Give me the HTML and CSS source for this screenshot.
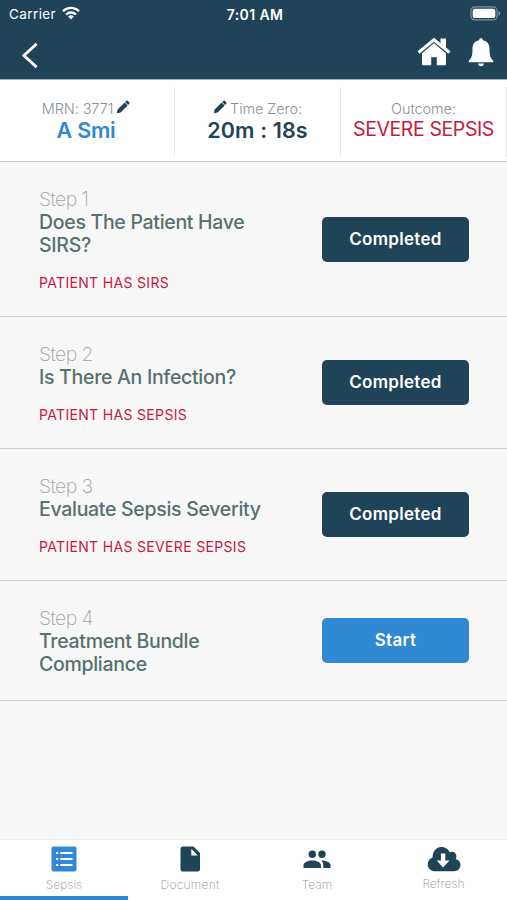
FILE: index.html
```html
<!DOCTYPE html>
<html lang="en">
<head>
<meta charset="utf-8">
<title>Sepsis</title>
<link rel="stylesheet" href="styles.css">
</head>
<body>
<div class="app">
  <header class="header">
    <div class="status">
      <div class="carrier"><span>Carrier</span>
        <svg width="18" height="14" viewBox="0 0 18 14" fill="none" stroke="#fff" stroke-width="2.3"><path d="M1 5.2a11.4 11.4 0 0 1 16 0M4 8.5a7.2 7.2 0 0 1 10 0"/><path d="M9 13.6l-2.9-3a4.2 4.2 0 0 1 5.8 0z" fill="#fff" stroke="none"/></svg>
      </div>
      <div class="clock">7:01 AM</div>
      <svg class="battery" width="31" height="15" viewBox="0 0 31 15"><rect x=".9" y=".9" width="26.2" height="13" rx="4" fill="none" stroke="#7d93a1" stroke-width="1.2"/><rect x="2.7" y="2.7" width="22.6" height="9.4" rx="2.2" fill="#fff"/><path d="M28.5 5v5q1.8-.8 1.8-2.5T28.5 5z" fill="#7d93a1"/></svg>
    </div>
    <nav class="navbar">
      <svg class="back" width="18" height="27" viewBox="0 0 18 27" fill="none" stroke="#fff" stroke-width="2.8"><path d="M15.6 1.900L2.900 13.500l12.700 11.600"/></svg>
      <div class="actions">
        <svg class="home" width="34" height="28" viewBox="0 0 34 28" fill="#fff"><path d="M17 4.800L29 15.200V26q0 1.200-1.200 1.200H19.800v-8h-5.600v8H6.200Q5 27.200 5 26V15.200z"/><path d="M1.700 14.600L17 1.800 32.300 14.600" fill="none" stroke="#1f4357" stroke-width="5"/><path d="M23.500.5h5.500v9.500l-5.500-4.300z"/><path d="M1.500 14.600L17 1.800l15.500 12.800" fill="none" stroke="#fff" stroke-width="3.200"/></svg>
        <svg width="26" height="30" viewBox="0 0 26 30" fill="#fff"><path d="M13 1q1.700 0 1.900 2.200c4.300.8 6.600 4 6.600 8.400 0 7.200.8 9.300 3.700 12.100v1.600H.8v-1.600c2.900-2.800 3.700-4.900 3.700-12.100 0-4.400 2.300-7.600 6.600-8.400Q11.300 1 13 1z"/><path d="M10.200 26.600h5.600a2.800 2.600 0 0 1-5.600 0z"/></svg>
      </div>
    </nav>
  </header>

  <section class="summary">
    <div class="cell">
      <div class="label mrn"><span>MRN: 3771</span><svg width="14" height="14" viewBox="0 0 14 14" fill="#1f4357"><path d="M.8 13.200l.8-3.800 7.100-7 3 3-7.100 7zM9.200 1.900l1.300-1.200q.6-.5 1.200 0l1.700 1.700q.5.600 0 1.200l-1.200 1.300z"/></svg></div>
      <div class="value patient">A Smi</div>
    </div>
    <div class="cell">
      <div class="label"><svg width="14" height="14" viewBox="0 0 14 14" fill="#1f4357"><path d="M.8 13.200l.8-3.800 7.100-7 3 3-7.100 7zM9.200 1.900l1.300-1.200q.6-.5 1.200 0l1.700 1.700q.5.600 0 1.200l-1.200 1.300z"/></svg><span>Time Zero:</span></div>
      <div class="value timer">20m : 18s</div>
    </div>
    <div class="cell">
      <div class="label"><span>Outcome:</span></div>
      <div class="value outcome">SEVERE SEPSIS</div>
    </div>
  </section>

  <main class="steps">
    <article class="row">
      <div class="info"><div class="step">Step 1</div><h2 class="title">Does The Patient Have<br>SIRS?</h2><p class="alert">PATIENT HAS SIRS</p></div>
      <button class="btn">Completed</button>
    </article>
    <article class="row">
      <div class="info"><div class="step">Step 2</div><h2 class="title">Is There An Infection?</h2><p class="alert">PATIENT HAS SEPSIS</p></div>
      <button class="btn">Completed</button>
    </article>
    <article class="row">
      <div class="info"><div class="step">Step 3</div><h2 class="title">Evaluate Sepsis Severity</h2><p class="alert">PATIENT HAS SEVERE SEPSIS</p></div>
      <button class="btn">Completed</button>
    </article>
    <article class="row">
      <div class="info"><div class="step">Step 4</div><h2 class="title">Treatment Bundle<br>Compliance</h2></div>
      <button class="btn start">Start</button>
    </article>
  </main>

  <footer class="tabs">
    <a class="tab active">
      <svg width="26" height="26" viewBox="0 0 26 26"><rect x=".5" y=".5" width="25" height="25" rx="2" fill="#3089d2"/><path d="M5 7h2.200M5 13h2.200M5 19h2.200M9.300 7H21.500M9.300 13H21.500M9.300 19H21.500" stroke="#fff" stroke-width="2.200"/></svg>
      <span>Sepsis</span>
    </a>
    <a class="tab document">
      <svg width="26" height="26" viewBox="0 0 26 26"><path d="M5.500.5h11l6.500 6.500v16q0 2.500-2.500 2.500h-15Q3.500 25.500 3.500 23V3Q3.500.5 5.500.5z" fill="#1f4357"/><path d="M14.300 2.800v6.700h6.400z" fill="#fff"/></svg>
      <span>Document</span>
    </a>
    <a class="tab">
      <svg width="28" height="26" viewBox="0 0 28 26" fill="#1f4357"><circle cx="9.300" cy="8.200" r="3.700"/><circle cx="19" cy="8.200" r="3.700"/><path d="M.5 22v-2.800c0-3.200 5-4.800 8.800-4.800s8.700 1.600 8.700 4.800V22zM18.500 14.500c4.100 0 9 1.600 9 4.700V22h-7.300v-2.800q0-2.900-1.700-4.700z"/></svg>
      <span>Team</span>
    </a>
    <a class="tab refresh">
      <svg width="34" height="26" viewBox="0 0 34 26"><path d="M8.500 25.300C3.500 25.300.7 22 .7 18.200c0-3.100 2-5.700 4.900-6.600C5.500 5.200 9.300 1 14.400 1c3.700 0 6.900 2 8.300 5.300 3.300-1.700 7 .6 6.700 4.500-.1.900-.3 1.500-.7 2.100 3 .9 4.800 3.200 4.800 5.900 0 3.700-2.700 6.500-6.500 6.500z" fill="#1f4357"/><path d="M13.900 7.500h4.400v7h4.200l-6.400 6.900-6.400-6.900h4.200z" fill="#fff"/></svg>
      <span>Refresh</span>
    </a>
  </footer>
</div>
</body>
</html>
```

FILE: styles.css
```css
* { box-sizing: border-box; }
body { margin: 0; font-family: Inter, "Liberation Sans", sans-serif; background: #f7f7f7; }
svg { display: block; flex: none; }
.app { width: 507px; height: 900px; display: flex; flex-direction: column; overflow: hidden; background: #f7f7f7; }

.header { height: 80px; background: #1f4357; border-bottom: 1px solid #a2b0b9; color: #fff; }
.status { height: 28px; padding: 0 6px 0 9px; display: grid; grid-template-columns: 1fr auto 1fr; align-items: center; }
.carrier { display: flex; align-items: center; gap: 6px; font-size: 13.5px; letter-spacing: .4px; }
.carrier svg { margin-top: -2px; }
.clock { font-size: 14px; font-weight: 600; letter-spacing: .4px; }
.battery { justify-self: end; margin-top: -1px; }
.navbar { height: 51px; padding: 0 13px 0 21px; display: flex; justify-content: space-between; align-items: center; }
.back { margin-top: 4px; }
.actions { display: flex; align-items: center; gap: 17px; margin-top: -3px; }

.summary { height: 82px; display: grid; grid-template-columns: 175px 166px 166px; background: #fff; border-bottom: 1px solid #c9c9c9; padding: 7px 0 4px; }
.cell { border-right: 1px solid #e8e9ea; padding-top: 12px; display: flex; flex-direction: column; align-items: center; }
.label { height: 18px; display: flex; align-items: center; gap: 3px; font-size: 14.5px; font-weight: 300; color: #87919a; letter-spacing: -.1px; }
.label svg { margin-top: -2px; }
.mrn { margin-right: 2px; }
.value { line-height: 26px; font-size: 21.5px; white-space: nowrap; }
.patient { color: #3089d2; font-weight: 600; margin-right: 2px; letter-spacing: -.2px; }
.timer { color: #1f4357; font-weight: 600; letter-spacing: .15px; }
.outcome { color: #c8193c; font-size: 19.5px; line-height: 24px; letter-spacing: -.4px; }

.steps { flex: 1; }
.row { display: flex; justify-content: space-between; align-items: center; padding: 26px 38px 24px 39px; border-bottom: 1px solid #cacbcc; }
.step { font-size: 19.5px; line-height: 23px; font-weight: 200; color: #9da2a3; letter-spacing: -.6px; }
.title { margin: 0; font-size: 19.5px; line-height: 23px; font-weight: 500; color: #58706f; white-space: nowrap; letter-spacing: -.3px; }
.alert { margin: 17px 0 1px; font-size: 14px; line-height: 17px; color: #c8193c; letter-spacing: .33px; }
.btn { width: 147px; height: 45px; border: 0; border-radius: 5px; background: #1f4357; color: #fff; font: 600 17px/45px Inter, sans-serif; letter-spacing: .3px; padding: 0; margin-top: -2px; }
.start { background: #3089d2; }

.tabs { height: 61px; display: grid; grid-template-columns: 128px 126px 126px 127px; background: #fff; border-top: 1px solid #ebebeb; }
.tab { display: flex; flex-direction: column; align-items: center; padding-top: 6px; font-size: 12px; font-weight: 200; line-height: 16px; color: #8b959b; gap: 5px; }
.tab.active { border-bottom: 4px solid #3089d2; }
.document { letter-spacing: .25px; padding-right: 2px; }
.refresh { gap: 4px; }
```
